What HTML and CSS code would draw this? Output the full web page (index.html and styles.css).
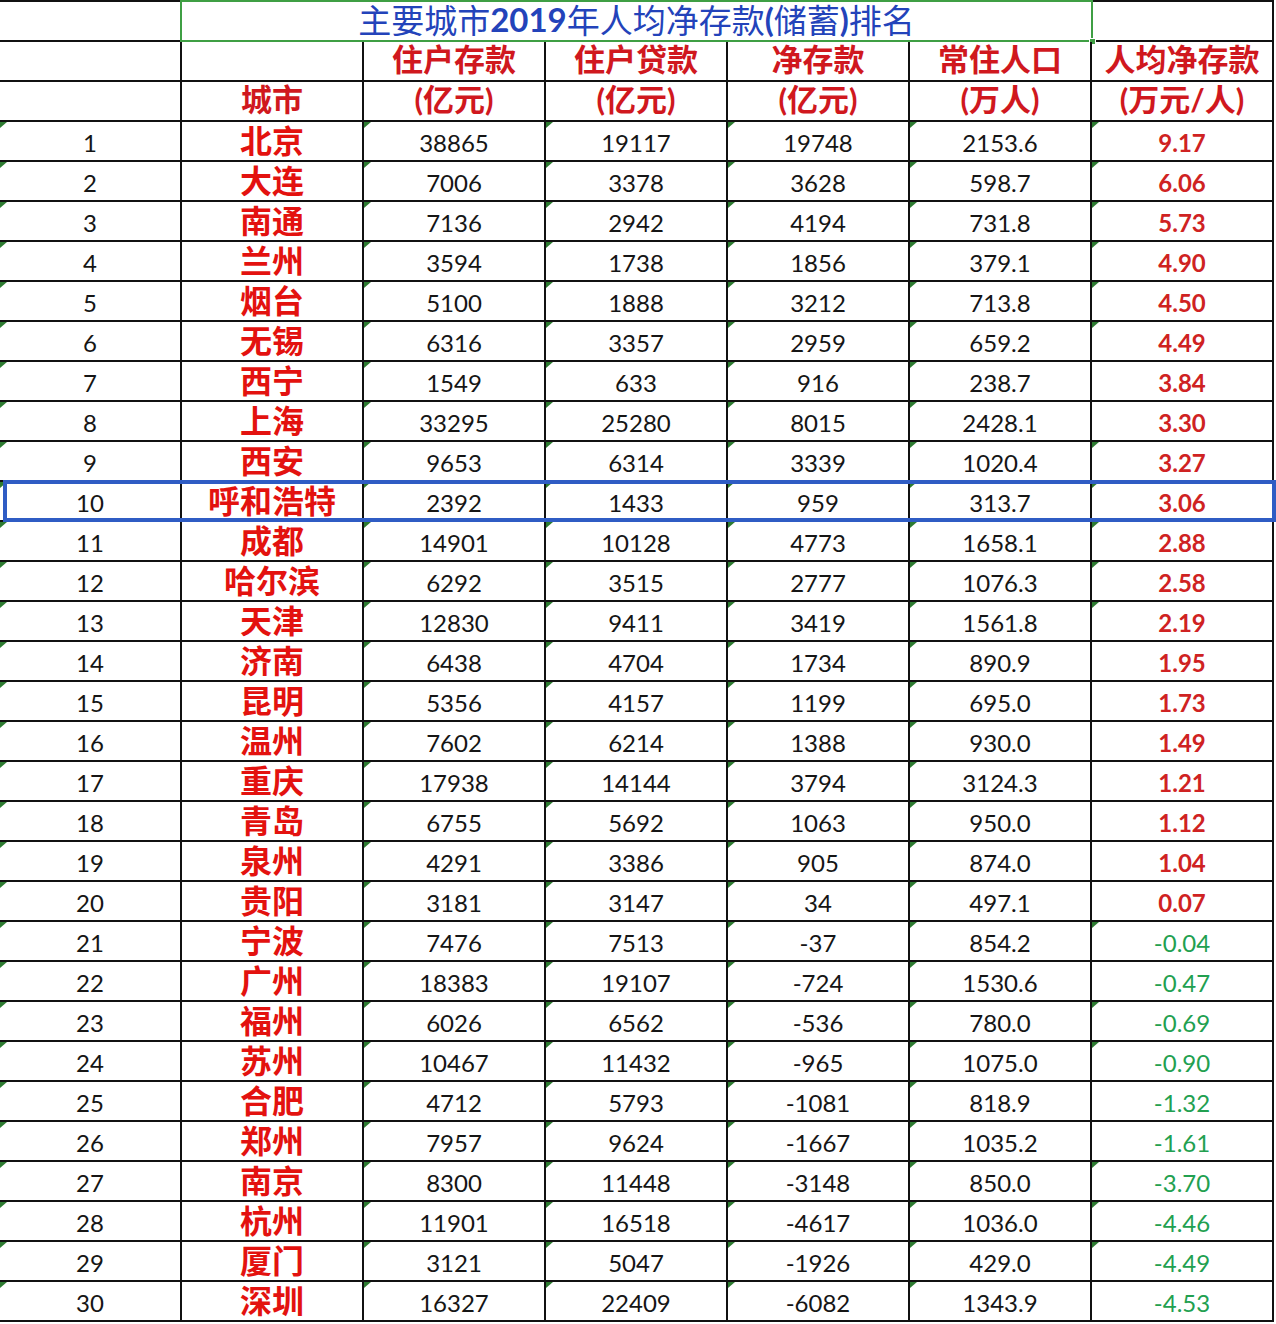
FILE: index.html
```html
<!DOCTYPE html>
<html lang="zh-CN">
<head>
<meta charset="utf-8">
<title>主要城市2019年人均净存款(储蓄)排名</title>
<link rel="stylesheet" href="styles.css">
</head>
<body>
<div class="sheet">
  <div class="title-row">
    <div class="tc tc-left"></div>
    <div class="tc title">主要城市<span class="lat">2019</span>年人均净存款<span class="lat">(</span>储蓄<span class="lat">)</span>排名</div>
    <div class="tc tc-right"></div>
  </div>
  <div class="row">
    <div class="c"></div><div class="c"></div>
    <div class="c h">住户存款</div><div class="c h">住户贷款</div><div class="c h">净存款</div><div class="c h">常住人口</div><div class="c h">人均净存款</div>
  </div>
  <div class="row">
    <div class="c"></div><div class="c h">城市</div>
    <div class="c h">(亿元)</div><div class="c h">(亿元)</div><div class="c h">(亿元)</div><div class="c h">(万人)</div><div class="c h">(万元/人)</div>
  </div>
  <div id="rows"></div>
</div>
<script src="app.js"></script>
</body>
</html>
```
FILE: styles.css
```css
html, body {
  margin: 0;
  padding: 0;
  background: #ffffff;
}
body {
  font-family: Lato, "Noto Sans CJK SC", sans-serif;
  color: #151515;
}
.sheet {
  width: 1276px;
}
.title-row {
  display: grid;
  grid-template-columns: 180px 913px 181px;
  height: 42px;
}
.tc {
  box-sizing: border-box;
  height: 42px;
}
.tc-left {
  border-top: 2px solid #111;
  border-bottom: 2px solid #111;
}
.tc-right {
  border-top: 2px solid #111;
  border-bottom: 2px solid #111;
  border-right: 2px solid #111;
}
.title {
  position: relative;
  border: 2px solid #3f9f44;
  display: flex;
  align-items: center;
  justify-content: center;
  font-family: "Noto Sans CJK SC", sans-serif;
  font-size: 33px;
  line-height: 1;
  color: #2343ba;
  padding-bottom: 3px;
}
.title .lat {
  font-family: Lato, sans-serif;
  font-weight: bold;
  font-size: 33px;
}
.title::after {
  content: "";
  position: absolute;
  right: -5px;
  bottom: -5px;
  width: 5px;
  height: 5px;
  background: #3f9f44;
  border: 1px solid #ffffff;
}
.row {
  position: relative;
  display: grid;
  grid-template-columns: repeat(7, 182px);
  height: 40px;
}
.c {
  position: relative;
  box-sizing: border-box;
  border-right: 2px solid #111;
  border-bottom: 2px solid #111;
  display: flex;
  align-items: center;
  justify-content: center;
  line-height: 1;
  white-space: nowrap;
}
.h {
  font-family: Lato, "Noto Sans CJK SC", sans-serif;
  font-weight: bold;
  font-size: 31px;
  color: #d0181e;
  padding-bottom: 3px;
}
.num {
  font-size: 24px;
  padding-top: 3px;
}
.city {
  font-family: "Noto Sans CJK SC", sans-serif;
  font-weight: bold;
  font-size: 32px;
  color: #e3120f;
  padding-bottom: 4px;
}
.per {
  font-size: 24px;
  font-weight: bold;
  color: #cf2222;
  padding-top: 3px;
}
.per.neg {
  color: #22a050;
  font-weight: normal;
}
.t::before {
  content: "";
  position: absolute;
  left: 0;
  top: 0;
  width: 0;
  height: 0;
  border-top: 6px solid #2d7b31;
  border-right: 7px solid transparent;
}
.row.hl::after {
  content: "";
  position: absolute;
  left: 3px;
  right: 0;
  top: -2px;
  bottom: 0;
  border: 4px solid #2f5cc4;
  z-index: 2;
  pointer-events: none;
}
```
FILE: app.js
```js
var data = [
  ["北京",38865,19117,19748,"2153.6","9.17"],
  ["大连",7006,3378,3628,"598.7","6.06"],
  ["南通",7136,2942,4194,"731.8","5.73"],
  ["兰州",3594,1738,1856,"379.1","4.90"],
  ["烟台",5100,1888,3212,"713.8","4.50"],
  ["无锡",6316,3357,2959,"659.2","4.49"],
  ["西宁",1549,633,916,"238.7","3.84"],
  ["上海",33295,25280,8015,"2428.1","3.30"],
  ["西安",9653,6314,3339,"1020.4","3.27"],
  ["呼和浩特",2392,1433,959,"313.7","3.06"],
  ["成都",14901,10128,4773,"1658.1","2.88"],
  ["哈尔滨",6292,3515,2777,"1076.3","2.58"],
  ["天津",12830,9411,3419,"1561.8","2.19"],
  ["济南",6438,4704,1734,"890.9","1.95"],
  ["昆明",5356,4157,1199,"695.0","1.73"],
  ["温州",7602,6214,1388,"930.0","1.49"],
  ["重庆",17938,14144,3794,"3124.3","1.21"],
  ["青岛",6755,5692,1063,"950.0","1.12"],
  ["泉州",4291,3386,905,"874.0","1.04"],
  ["贵阳",3181,3147,34,"497.1","0.07"],
  ["宁波",7476,7513,-37,"854.2","-0.04"],
  ["广州",18383,19107,-724,"1530.6","-0.47"],
  ["福州",6026,6562,-536,"780.0","-0.69"],
  ["苏州",10467,11432,-965,"1075.0","-0.90"],
  ["合肥",4712,5793,-1081,"818.9","-1.32"],
  ["郑州",7957,9624,-1667,"1035.2","-1.61"],
  ["南京",8300,11448,-3148,"850.0","-3.70"],
  ["杭州",11901,16518,-4617,"1036.0","-4.46"],
  ["厦门",3121,5047,-1926,"429.0","-4.49"],
  ["深圳",16327,22409,-6082,"1343.9","-4.53"]
];
var lastTri = {1:1,2:1,3:1,4:1,5:1,6:1,9:1,10:1,11:1,12:1,13:1,21:1,23:1,24:1,27:1,28:1,29:1};
var host = document.getElementById("rows");
data.forEach(function (d, i) {
  var n = i + 1;
  var row = document.createElement("div");
  row.className = "row" + (n === 10 ? " hl" : "");
  function cell(cls, text) {
    var c = document.createElement("div");
    c.className = "c " + cls;
    c.textContent = text;
    row.appendChild(c);
  }
  cell("num t", String(n));
  cell("city", d[0]);
  cell("num t", String(d[1]));
  cell("num t", String(d[2]));
  cell("num t", String(d[3]));
  cell("num t", d[4]);
  var neg = d[5].charAt(0) === "-";
  cell("per" + (neg ? " neg" : "") + (lastTri[n] ? " t" : ""), d[5]);
  host.appendChild(row);
});
```
